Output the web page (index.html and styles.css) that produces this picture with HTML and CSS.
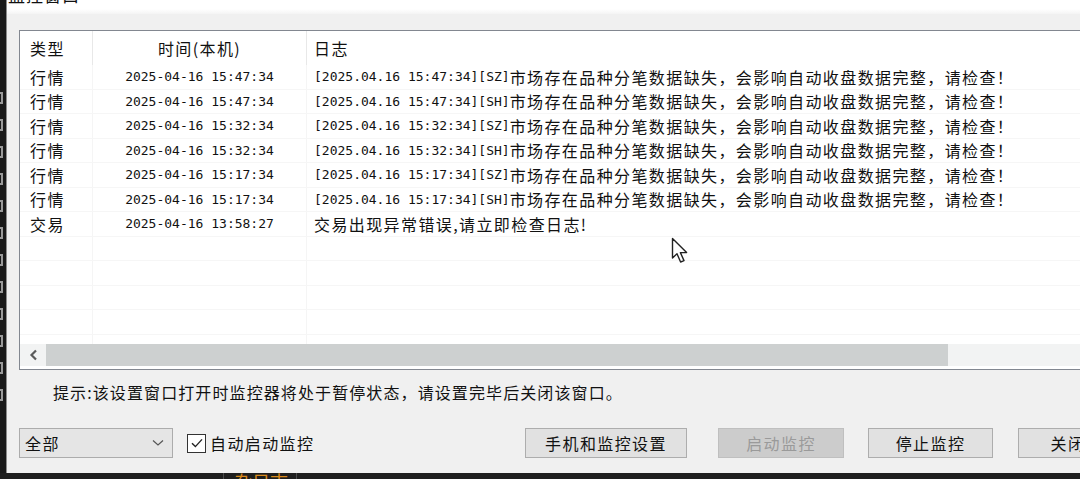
FILE: index.html
```html
<!DOCTYPE html>
<html lang="zh-CN">
<head>
    <meta charset="UTF-8">
    <title>监控窗口</title>
    <link rel="stylesheet" href="styles.css">
</head>
<body>
    <div class="screen">
        <!-- край соседнего окна -->
        <div class="edge">
            <i></i><i></i><i></i><i></i><i></i><i></i><i></i><i></i><i></i><i></i><i></i><i></i>
        </div>

        <div class="dialog">
            <div class="titlebar"><span>监控窗口</span></div>

            <div class="content">
                <!-- список событий -->
                <div class="list">
                    <div class="list-head">
                        <div class="cell">类型</div>
                        <div class="cell cell-time">时间(本机)</div>
                        <div class="cell cell-log">日志</div>
                    </div>

                    <div class="list-rows">
                        <div class="row">
                            <div class="cell">行情</div>
                            <div class="cell cell-time mono">2025-04-16 15:47:34</div>
                            <div class="cell cell-log"><span class="mono">[2025.04.16 15:47:34][SZ]</span>市场存在品种分笔数据缺失，会影响自动收盘数据完整，请检查！</div>
                        </div>
                        <div class="row">
                            <div class="cell">行情</div>
                            <div class="cell cell-time mono">2025-04-16 15:47:34</div>
                            <div class="cell cell-log"><span class="mono">[2025.04.16 15:47:34][SH]</span>市场存在品种分笔数据缺失，会影响自动收盘数据完整，请检查！</div>
                        </div>
                        <div class="row">
                            <div class="cell">行情</div>
                            <div class="cell cell-time mono">2025-04-16 15:32:34</div>
                            <div class="cell cell-log"><span class="mono">[2025.04.16 15:32:34][SZ]</span>市场存在品种分笔数据缺失，会影响自动收盘数据完整，请检查！</div>
                        </div>
                        <div class="row">
                            <div class="cell">行情</div>
                            <div class="cell cell-time mono">2025-04-16 15:32:34</div>
                            <div class="cell cell-log"><span class="mono">[2025.04.16 15:32:34][SH]</span>市场存在品种分笔数据缺失，会影响自动收盘数据完整，请检查！</div>
                        </div>
                        <div class="row">
                            <div class="cell">行情</div>
                            <div class="cell cell-time mono">2025-04-16 15:17:34</div>
                            <div class="cell cell-log"><span class="mono">[2025.04.16 15:17:34][SZ]</span>市场存在品种分笔数据缺失，会影响自动收盘数据完整，请检查！</div>
                        </div>
                        <div class="row">
                            <div class="cell">行情</div>
                            <div class="cell cell-time mono">2025-04-16 15:17:34</div>
                            <div class="cell cell-log"><span class="mono">[2025.04.16 15:17:34][SH]</span>市场存在品种分笔数据缺失，会影响自动收盘数据完整，请检查！</div>
                        </div>
                        <div class="row">
                            <div class="cell">交易</div>
                            <div class="cell cell-time mono">2025-04-16 13:58:27</div>
                            <div class="cell cell-log">交易出现异常错误,请立即检查日志!</div>
                        </div>
                        <div class="row"><div class="cell"></div><div class="cell"></div><div class="cell"></div></div>
                        <div class="row"><div class="cell"></div><div class="cell"></div><div class="cell"></div></div>
                        <div class="row"><div class="cell"></div><div class="cell"></div><div class="cell"></div></div>
                        <div class="row"><div class="cell"></div><div class="cell"></div><div class="cell"></div></div>
                        <div class="row"><div class="cell"></div><div class="cell"></div><div class="cell"></div></div>
                    </div>

                    <div class="hscroll">
                        <div class="hscroll-arrow">
                            <svg width="9" height="12" viewBox="0 0 9 12"><path d="M7 1.5 L2.5 6 L7 10.5" fill="none" stroke="#5a5a5a" stroke-width="2.2"/></svg>
                        </div>
                        <div class="hscroll-thumb"></div>
                        <div class="hscroll-track"></div>
                    </div>
                </div>

                <p class="hint">提示:该设置窗口打开时监控器将处于暂停状态，请设置完毕后关闭该窗口。</p>

                <!-- нижняя панель -->
                <div class="controls">
                    <div class="controls-left">
                        <div class="combo">
                            <span>全部</span>
                            <svg width="12" height="8" viewBox="0 0 12 8"><path d="M1 1.5 L6 6 L11 1.5" fill="none" stroke="#555" stroke-width="1.2"/></svg>
                        </div>
                        <label class="check">
                            <span class="check-box">
                                <svg width="16" height="16" viewBox="0 0 16 16"><path d="M3 8.2 L6.4 11.6 L13 4.4" fill="none" stroke="#222" stroke-width="1.4"/></svg>
                            </span>
                            <span>自动启动监控</span>
                        </label>
                    </div>
                    <button class="btn btn-setup">手机和监控设置</button>
                    <button class="btn btn-start" disabled>启动监控</button>
                    <button class="btn btn-stop">停止监控</button>
                    <button class="btn btn-close">关闭</button>
                </div>
            </div>
        </div>
    </div>

    <div class="taskbar">
        <div class="taskbar-tab">杂日志</div>
    </div>

    <svg class="cursor" width="20" height="28" viewBox="0 0 20 28">
        <path d="M1.5 1.5 L1.5 21 L6 16.8 L9.6 25 L13 23.6 L9.4 15.6 L15.6 15.6 Z" fill="#fff" stroke="#222" stroke-width="1.4" stroke-linejoin="round"/>
    </svg>
</body>
</html>
```

FILE: styles.css
```css
/* Базовые стили */
body {
    margin: 0;
    width: 1080px;
    height: 479px;
    overflow: hidden;
    background-color: #1c1c1c;
    font-family: "Noto Sans CJK SC", "Liberation Sans", sans-serif;
    font-size: 16px;
    color: #111;
    position: relative;
}

.screen {
    display: flex;
    height: 473px;
}

/* Край окна слева */
.edge {
    width: 6px;
    flex: none;
    overflow: hidden;
    background-color: #1a1a1a;
    display: flex;
    flex-direction: column;
    gap: 15px;
    padding-top: 92px;
    box-sizing: border-box;
}

.edge i {
    display: block;
    width: 3px;
    height: 12px;
    border-top: 2px solid #9a9a9a;
    border-right: 2px solid #9a9a9a;
    border-bottom: 2px solid #9a9a9a;
    box-sizing: border-box;
}

/* Окно */
.dialog {
    width: 1160px;
    flex: none;
    background-color: #f0f0f0;
    border-left: 1px solid #8c8c8c;
    display: flex;
    flex-direction: column;
}

.titlebar {
    height: 14px;
    flex: none;
    overflow: hidden;
    display: flex;
    align-items: flex-end;
    padding-left: 1px;
    background: linear-gradient(#ffffff, #ffffff 65%, #f4f4f4);
}

.titlebar span {
    font-size: 17px;
    line-height: 20px;
    margin-bottom: 9px;
    letter-spacing: 1px;
}

.content {
    padding: 16px 12px 0;
    display: flex;
    flex-direction: column;
}

/* Список */
.list {
    height: 340px;
    box-sizing: border-box;
    border: 1px solid #828790;
    background-color: #fff;
    display: flex;
    flex-direction: column;
}

.list-head,
.row {
    display: grid;
    grid-template-columns: 73px 214px 1fr;
}

.list-head {
    height: 34px;
    flex: none;
}

.cell {
    display: flex;
    align-items: center;
    padding-left: 10px;
    white-space: nowrap;
    letter-spacing: 1.4px;
    overflow: hidden;
}

.list-head .cell {
    border-right: 1px solid #e8e8e8;
}

.cell-time {
    justify-content: center;
    padding-left: 0;
}

.cell-log {
    padding-left: 7px;
}

.list-rows {
    flex: 1;
    overflow: hidden;
}

.row {
    height: 24.5px;
    box-sizing: border-box;
    border-bottom: 1px solid #f6f6f6;
}

.row .cell {
    border-right: 1px solid #f5f5f5;
}

.mono {
    font-family: "DejaVu Sans Mono", monospace;
    font-size: 13px;
    letter-spacing: 0;
}

/* Горизонтальная прокрутка */
.hscroll {
    height: 25px;
    flex: none;
    display: flex;
    align-items: flex-start;
}

.hscroll-arrow {
    width: 26px;
    height: 22px;
    display: flex;
    align-items: center;
    justify-content: center;
    background-color: #f2f3f3;
}

.hscroll-thumb {
    width: 902px;
    height: 22px;
    background-color: #cdd0d0;
}

.hscroll-track {
    flex: 1;
    height: 22px;
    background-color: #f2f3f3;
}

/* Подсказка */
.hint {
    margin: 11px 0 0 34px;
    line-height: 22px;
    letter-spacing: 1.1px;
}

/* Нижняя панель */
.controls {
    display: flex;
    align-items: center;
    margin-top: 25px;
    height: 30px;
}

.controls-left {
    width: 506px;
    display: flex;
    align-items: center;
}

.combo {
    width: 154px;
    height: 30px;
    box-sizing: border-box;
    border: 1px solid #acacac;
    background-color: #e5e5e5;
    display: flex;
    align-items: center;
    justify-content: space-between;
    padding: 0 8px 0 5px;
    letter-spacing: 1.4px;
}

.check {
    margin-left: 14px;
    display: flex;
    align-items: center;
    gap: 4px;
    letter-spacing: 1.4px;
}

.check-box {
    width: 19px;
    height: 19px;
    box-sizing: border-box;
    border: 1px solid #333;
    background-color: #fff;
    display: flex;
    align-items: center;
    justify-content: center;
}

.btn {
    height: 30px;
    box-sizing: border-box;
    border: 1px solid #adadad;
    background-color: #e1e1e1;
    font-family: inherit;
    font-size: 16px;
    letter-spacing: 1.4px;
    color: #111;
    padding: 0;
    flex: none;
}

.btn-setup {
    width: 162px;
}

.btn-start {
    width: 126px;
    margin-left: 31px;
    background-color: #cccccc;
    border-color: #bfbfbf;
    color: #9a9a9a;
}

.btn-stop {
    width: 125px;
    margin-left: 24px;
}

.btn-close {
    width: 100px;
    margin-left: 25px;
}

/* Полоса снизу */
.taskbar {
    height: 6px;
    overflow: hidden;
    background-color: #1e1e1e;
    display: flex;
}

.taskbar-tab {
    margin-left: 223px;
    width: 74px;
    box-sizing: border-box;
    border-left: 1px solid #4a4a4a;
    border-right: 1px solid #4a4a4a;
    font-size: 18px;
    line-height: 20px;
    margin-top: -2px;
    padding-left: 10px;
    color: #d9891c;
    white-space: nowrap;
    overflow: hidden;
}

/* Указатель мыши */
.cursor {
    position: absolute;
    left: 671px;
    top: 237px;
}
```
